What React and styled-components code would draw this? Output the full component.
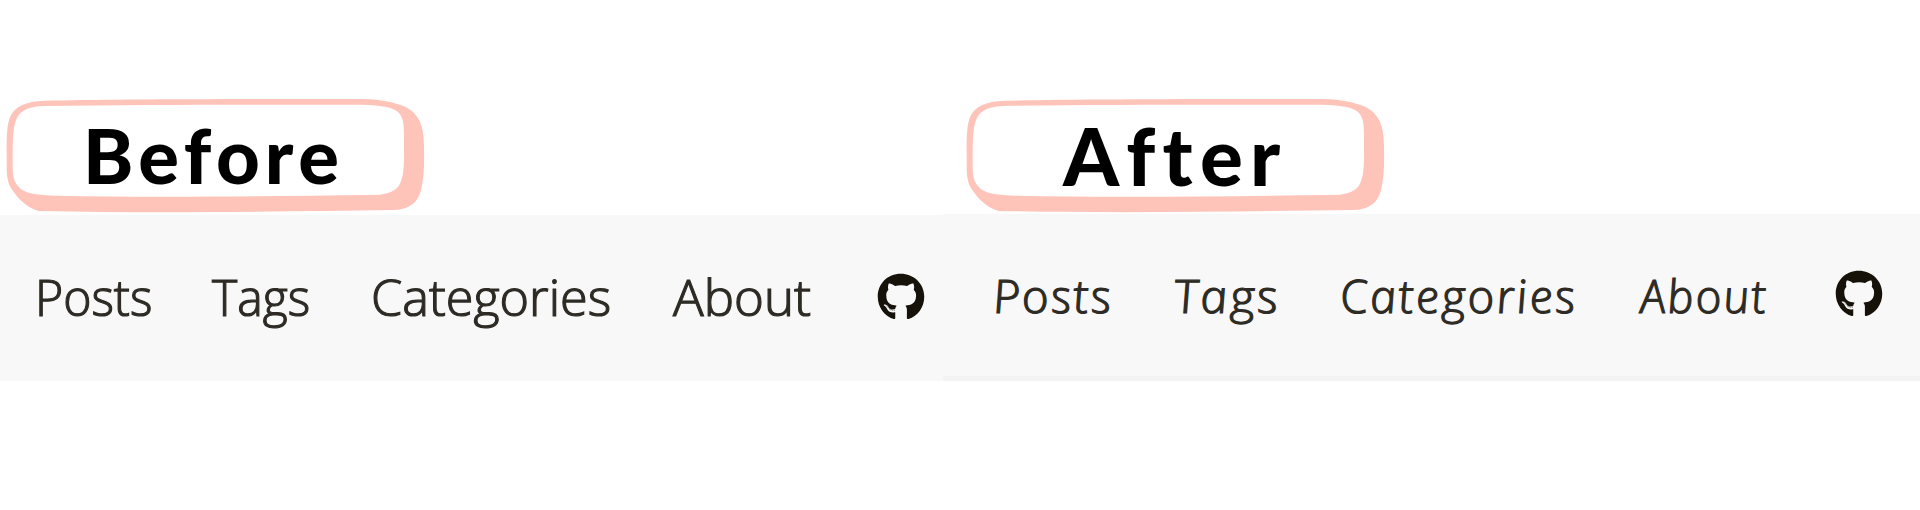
import React from "react";
import styled, { createGlobalStyle } from "styled-components";
import { FaGithub } from "react-icons/fa";

const GlobalStyle = createGlobalStyle`
  body { margin: 0; background: #fff; }
`;

const Page = styled.main`
  width: 1920px;
  height: 510px;
  padding-top: 90px;
  box-sizing: border-box;
  background: #fff;
  overflow: hidden;
`;

const Titles = styled.header`
  display: grid;
  grid-template-columns: 960px 960px;
  height: 124px;
`;

const Title = styled.h2`
  position: relative;
  margin: 0;
  width: 440px;
  height: 124px;
  padding-left: ${(p) => p.$inset}px;
  box-sizing: border-box;
`;

const Frame = styled.svg`
  position: absolute;
  inset: 0;
  width: 440px;
  height: 124px;
`;

const TitleText = styled.span`
  position: relative;
  display: inline-block;
  padding-top: 3px;
  font: 900 ${(p) => p.$size}px/124px Lato, sans-serif;
  font-kerning: none;
  letter-spacing: ${(p) => p.$spacing}px;
  color: #000;
  white-space: nowrap;
`;

const Bars = styled.div`
  display: grid;
  grid-template-columns: 943px 977px;
  height: 167px;
`;

const Bar = styled.nav`
  display: flex;
  box-sizing: border-box;
  height: ${(p) => (p.$handwritten ? 167 : 166)}px;
  margin-top: ${(p) => (p.$handwritten ? 0 : 1)}px;
  padding-left: ${(p) => (p.$handwritten ? 52 : 37)}px;
  border-bottom: ${(p) => (p.$handwritten ? "5px solid #f3f3f3" : "none")};
  background: #f8f8f8;
  color: #16120a;
`;

const Item = styled.a`
  flex: none;
  width: ${(p) => p.$width}px;
  height: 100%;
`;

const PlainWord = styled.span`
  display: inline-block;
  font: 300 50px/166px "Open Sans", sans-serif;
  color: #2e2b25;
  -webkit-text-stroke: 1.2px currentColor;
  white-space: nowrap;
  transform-origin: 0 50%;
  transform: translate(${(p) => p.$dx || 0}px, -1px) scaleX(${(p) => p.$stretch});
`;

const HandWord = styled(PlainWord)`
  font: italic 300 46px/166px "Open Sans", sans-serif;
  letter-spacing: 2px;
  transform: translate(${(p) => p.$dx || 0}px, -2px) scaleX(${(p) => p.$stretch}) skewX(8deg);
`;

const Github = styled(FaGithub)`
  display: block;
  width: 48px;
  height: 48px;
  margin-top: ${(p) => p.$top}px;
`;

const plain = [
  { text: "Posts", width: 175, stretch: 0.963, dx: -2 },
  { text: "Tags", width: 160, stretch: 0.963, dx: 0 },
  { text: "Categories", width: 299, stretch: 1.007, dx: -1 },
  { text: "About", width: 206, stretch: 1.02, dx: 2 },
];

const hand = [
  { text: "Posts", width: 179, stretch: 1.04, dx: -3 },
  { text: "Tags", width: 167, stretch: 1.07, dx: -1 },
  { text: "Categories", width: 297, stretch: 1.033, dx: -2 },
  { text: "About", width: 197, stretch: 1, dx: 1 },
];

function TitleBox({ text, inset, spacing, size }) {
  return (
    <Title $inset={inset}>
      <Frame viewBox="0 0 1320 372" aria-hidden="true">
        <path
          fill="#ffc4b9"
          d="M20 225C20 160 18 112 30 82C43 49 76 34 135 32C300 28 690 26 1090 27C1140 28 1170 35 1204 46C1256 65 1272 105 1272 170C1273 215 1273 263 1262 304C1252 342 1222 360 1180 360C850 364 500 371 115 363C82 352 60 332 43 308C25 287 20 270 20 225Z"
        />
        <path
          fill="#fff"
          d="M38 210C38 152 38 115 49 88C62 57 92 49 135 48C420 43 760 44 1065 44C1115 44 1168 47 1190 63C1214 80 1212 112 1212 165C1212 221 1213 254 1200 281C1186 309 1149 315 1110 315C770 319 460 323 170 317C113 316 75 313 54 289C37 267 38 248 38 210Z"
        />
      </Frame>
      <TitleText $spacing={spacing} $size={size}>{text}</TitleText>
    </Title>
  );
}

export default function App() {
  return (
    <>
      <GlobalStyle />
      <Page>
        <Titles>
          <TitleBox text="Before" inset={83} spacing={4.8} size={76} />
          <TitleBox text="After" inset={103} spacing={7.2} size={80} />
        </Titles>
        <Bars>
          <Bar>
            {plain.map((w) => (
              <Item key={w.text} $width={w.width}>
                <PlainWord $stretch={w.stretch} $dx={w.dx}>{w.text}</PlainWord>
              </Item>
            ))}
            <Github $top={58} />
          </Bar>
          <Bar $handwritten>
            {hand.map((w) => (
              <Item key={w.text} $width={w.width}>
                <HandWord $stretch={w.stretch} $dx={w.dx}>{w.text}</HandWord>
              </Item>
            ))}
            <Github $top={56} />
          </Bar>
        </Bars>
      </Page>
    </>
  );
}
